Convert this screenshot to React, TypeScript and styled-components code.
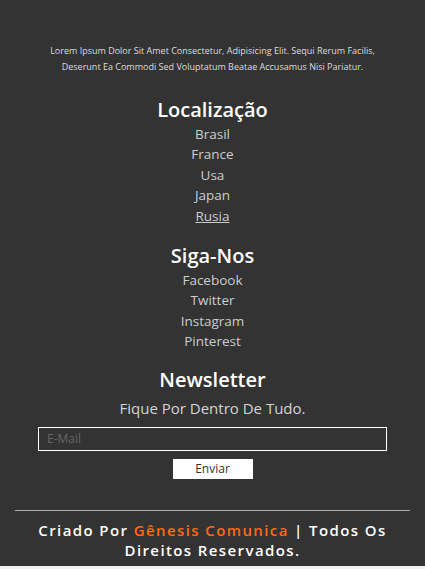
import React from 'react';
import styled, { createGlobalStyle } from 'styled-components';

const GlobalStyle = createGlobalStyle`
  * { box-sizing: border-box; }
  html, body {
    margin: 0;
    padding: 0;
    background: #f0f0f0;
    font-family: 'Open Sans', 'Noto Sans', sans-serif;
    text-transform: capitalize;
  }
`;

const locations = ['Brasil', 'France', 'Usa', 'Japan', 'Rusia'];
const socials = ['Facebook', 'Twitter', 'Instagram', 'Pinterest'];

const App: React.FC = () => {
  return (
    <>
      <GlobalStyle />
      <Footer>
        <About>
          Lorem ipsum dolor sit amet consectetur, adipisicing elit. Sequi rerum facilis,
          deserunt ea commodi sed voluptatum beatae accusamus nisi pariatur.
        </About>

        <Section $spacing={17}>
          <Title>Localização</Title>
          <LinkList>
            {locations.map(name => (
              <LinkItem key={name}>
                <FooterLink href="#" $active={name === 'Rusia'}>{name}</FooterLink>
              </LinkItem>
            ))}
          </LinkList>
        </Section>

        <Section $spacing={15}>
          <Title>Siga-Nos</Title>
          <LinkList>
            {socials.map(name => (
              <LinkItem key={name}>
                <FooterLink href="#">{name}</FooterLink>
              </LinkItem>
            ))}
          </LinkList>
        </Section>

        <Section>
          <Title>Newsletter</Title>
          <Lead>Fique por dentro de tudo.</Lead>
          <Form onSubmit={e => e.preventDefault()}>
            <EmailInput type="email" placeholder="E-Mail" />
            <SendButton type="submit">Enviar</SendButton>
          </Form>
        </Section>

        <Divider />

        <Credits>
          Criado por <Brand>Gênesis Comunica</Brand> | Todos os direitos reservados.
        </Credits>
      </Footer>
    </>
  );
};

const Footer = styled.footer`
  background: #333333;
  color: #ffffff;
  padding: 43px 15px 6px;
  display: flex;
  flex-direction: column;
  align-items: center;
  margin-bottom: 3px;
`;

const About = styled.p`
  margin: 0 0 22px;
  max-width: 340px;
  text-align: center;
  font-size: 9px;
  line-height: 16px;
  color: #dddddd;
`;

const Section = styled.section<{ $spacing?: number }>`
  display: flex;
  flex-direction: column;
  align-items: center;
  margin-bottom: ${p => p.$spacing ?? 15}px;
  width: 100%;
`;

const Title = styled.h3`
  margin: 0 0 1px;
  font-size: 20px;
  line-height: 26px;
  font-weight: 600;
  color: #ffffff;
`;

const LinkList = styled.ul`
  list-style: none;
  margin: 0;
  padding: 0;
  text-align: center;
`;

const LinkItem = styled.li`
  font-size: 13.5px;
  line-height: 20.4px;
`;

const FooterLink = styled.a<{ $active?: boolean }>`
  color: #cccccc;
  text-decoration: ${p => (p.$active ? 'underline' : 'none')};
`;

const Lead = styled.p`
  margin: 3px 0 8px;
  font-size: 15px;
  line-height: 22px;
  color: #d4d4d4;
`;

const Form = styled.form`
  width: 100%;
  display: flex;
  flex-direction: column;
  align-items: center;
  gap: 8px;
  padding: 0 23px;
`;

const EmailInput = styled.input`
  width: 100%;
  height: 24px;
  background: transparent;
  border: 1px solid #ffffff;
  padding: 0 8px;
  font-family: inherit;
  font-size: 12px;
  color: #ffffff;
  outline: none;
  &::placeholder { color: #666666; }
`;

const SendButton = styled.button`
  width: 80px;
  height: 20px;
  border: none;
  background: #ffffff;
  color: #333333;
  font-family: inherit;
  font-size: 12px;
  padding: 0;
  cursor: pointer;
`;

const Divider = styled.hr`
  width: 100%;
  margin: 16px 0 9px;
  border: none;
  border-top: 1px solid #aaaaaa;
`;

const Credits = styled.p`
  margin: 0;
  max-width: 380px;
  text-align: center;
  font-size: 15px;
  line-height: 20px;
  font-weight: 600;
  letter-spacing: 1.4px;
  color: #ffffff;
`;

const Brand = styled.span`
  color: #ff6a13;
`;

export default App;
